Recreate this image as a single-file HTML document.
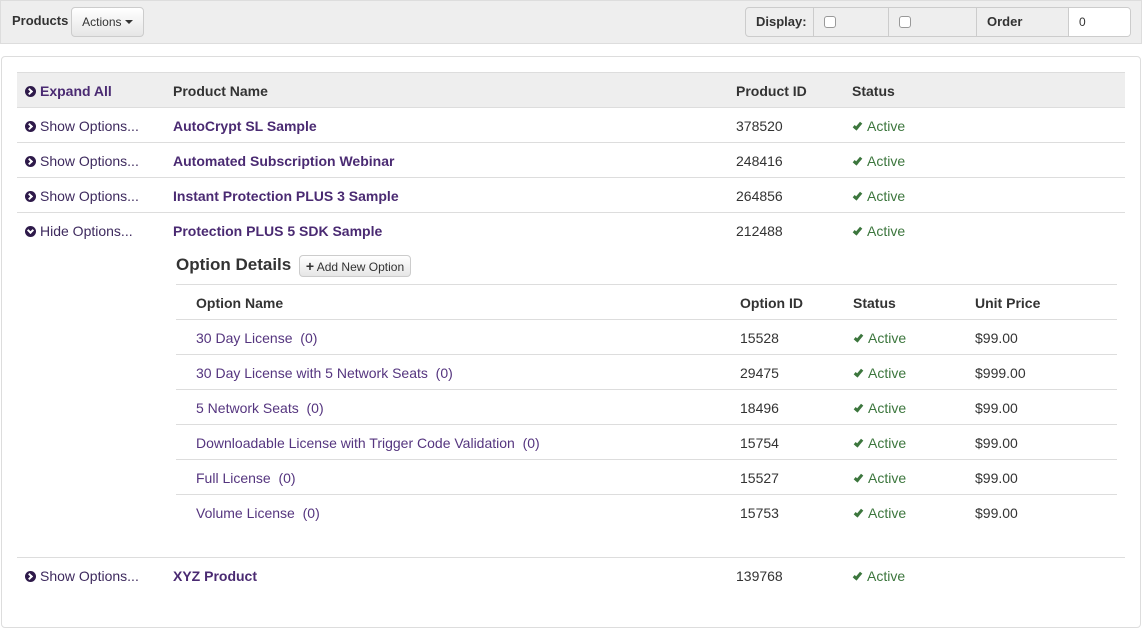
<!DOCTYPE html>
<html><head><meta charset="utf-8"><style>
*{box-sizing:border-box;margin:0;padding:0}
body{width:1142px;height:629px;background:#fff;font-family:"Liberation Sans",Arial,sans-serif;font-size:14px;color:#333;position:relative;overflow:hidden}
.a{position:absolute}
.top{left:0;top:0;width:1142px;height:44px;background:#eee;border:1px solid #ddd}
.btn{background:linear-gradient(#fff,#e6e6e6);border:1px solid #ccc;border-radius:4px}
.grp{left:745px;top:7px;height:30px;border:1px solid #ccc;border-radius:4px;display:flex;background:#eee;overflow:hidden}
.grp div{height:28px;line-height:28px;padding:0 10px;border-right:1px solid #ccc;font-size:13px}
.cb{display:inline-block;width:12px;height:12px;border:1px solid #999;border-radius:3px;background:#fff;vertical-align:-2px;margin-right:5px}
.panel{left:1px;top:56px;width:1140px;height:572px;border:1px solid #ddd;border-radius:4px}
.row{position:absolute;left:17px;width:1108px;height:35px;border-top:1px solid #ddd}
.row span{position:absolute;top:10px;line-height:16px;white-space:nowrap}
.hd{background:#eee;font-weight:bold;border-top:1px solid #ddd}
.c1{left:8px;color:#3e2a5e}
.c2{left:156px;font-weight:bold;color:#4a2a72}
.c3{left:719px}
.c4{left:835px;color:#3c763d}
.ic{display:inline-block;width:11px;height:11px;border-radius:50%;background:#2e1a4a;vertical-align:-1px;margin-right:4px;position:relative}
.ic:after{content:"";position:absolute;left:2px;top:3px;width:3px;height:3px;border-right:2px solid #fff;border-bottom:2px solid #fff;transform:rotate(-45deg)}
.ic.d:after{left:3px;top:1.5px;transform:rotate(45deg)}
.ck{display:inline-block;width:5px;height:9px;border-right:3px solid #3c763d;border-bottom:3px solid #3c763d;transform:rotate(40deg);margin:0 7px 0 3px;vertical-align:1px}
.orow{position:absolute;left:176px;width:941px;height:35px;border-top:1px solid #ddd}
.orow span{position:absolute;top:10px;line-height:16px;white-space:nowrap}
.o1{left:20px;color:#55357f}.o2{left:564px}.o3{left:677px;color:#3c763d}.o4{left:799px}
</style></head><body>
<div class="a top"></div>
<div class="a" style="left:12px;top:13px;font-weight:bold;font-size:13px">Products</div>
<div class="a btn" style="left:71px;top:7px;width:73px;height:30px;line-height:28px;text-align:center;font-size:12px">Actions <span style="display:inline-block;border-left:4px solid transparent;border-right:4px solid transparent;border-top:4px solid #333;vertical-align:2px"></span></div>
<div class="a grp">
<div style="font-weight:bold;width:68px">Display:</div>
<div style="width:75px"><span class="cb"></span>Hidden</div>
<div style="width:88px"><span class="cb"></span>Disabled</div>
<div style="font-weight:bold;width:92px">Order Level:</div>
<div style="background:#fff;border:none;width:61px;font-size:12px">0</div>
</div>
<div class="a panel"></div>

<div class="row hd" style="top:72px"><span class="c1" style="font-weight:bold;color:#4a2a72"><i class="ic"></i>Expand All</span><span class="c2" style="color:#333">Product Name</span><span class="c3">Product ID</span><span class="c4" style="color:#333">Status</span></div>
<div class="row" style="top:107px"><span class="c1"><i class="ic"></i>Show Options...</span><span class="c2">AutoCrypt SL Sample</span><span class="c3">378520</span><span class="c4"><i class="ck"></i>Active</span></div>
<div class="row" style="top:142px"><span class="c1"><i class="ic"></i>Show Options...</span><span class="c2">Automated Subscription Webinar</span><span class="c3">248416</span><span class="c4"><i class="ck"></i>Active</span></div>
<div class="row" style="top:177px"><span class="c1"><i class="ic"></i>Show Options...</span><span class="c2">Instant Protection PLUS 3 Sample</span><span class="c3">264856</span><span class="c4"><i class="ck"></i>Active</span></div>
<div class="row" style="top:212px"><span class="c1"><i class="ic d"></i>Hide Options...</span><span class="c2">Protection PLUS 5 SDK Sample</span><span class="c3">212488</span><span class="c4"><i class="ck"></i>Active</span></div>

<div class="a" style="left:176px;top:255px;font-size:17px;font-weight:bold;color:#333">Option Details</div>
<div class="a btn" style="left:299px;top:255px;width:112px;height:22px;line-height:20px;text-align:center;font-size:12px"><b style="font-size:14px">+</b> Add New Option</div>

<div class="orow" style="top:284px;font-weight:bold"><span class="o1" style="color:#333">Option Name</span><span class="o2">Option ID</span><span class="o3" style="color:#333">Status</span><span class="o4">Unit Price</span></div>
<div class="orow" style="top:319px"><span class="o1">30 Day License&nbsp; (0)</span><span class="o2">15528</span><span class="o3"><i class="ck"></i>Active</span><span class="o4">$99.00</span></div>
<div class="orow" style="top:354px"><span class="o1">30 Day License with 5 Network Seats&nbsp; (0)</span><span class="o2">29475</span><span class="o3"><i class="ck"></i>Active</span><span class="o4">$999.00</span></div>
<div class="orow" style="top:389px"><span class="o1">5 Network Seats&nbsp; (0)</span><span class="o2">18496</span><span class="o3"><i class="ck"></i>Active</span><span class="o4">$99.00</span></div>
<div class="orow" style="top:424px"><span class="o1">Downloadable License with Trigger Code Validation&nbsp; (0)</span><span class="o2">15754</span><span class="o3"><i class="ck"></i>Active</span><span class="o4">$99.00</span></div>
<div class="orow" style="top:459px"><span class="o1">Full License&nbsp; (0)</span><span class="o2">15527</span><span class="o3"><i class="ck"></i>Active</span><span class="o4">$99.00</span></div>
<div class="orow" style="top:494px"><span class="o1">Volume License&nbsp; (0)</span><span class="o2">15753</span><span class="o3"><i class="ck"></i>Active</span><span class="o4">$99.00</span></div>

<div class="row" style="top:557px"><span class="c1"><i class="ic"></i>Show Options...</span><span class="c2">XYZ Product</span><span class="c3">139768</span><span class="c4"><i class="ck"></i>Active</span></div>
</body></html>
